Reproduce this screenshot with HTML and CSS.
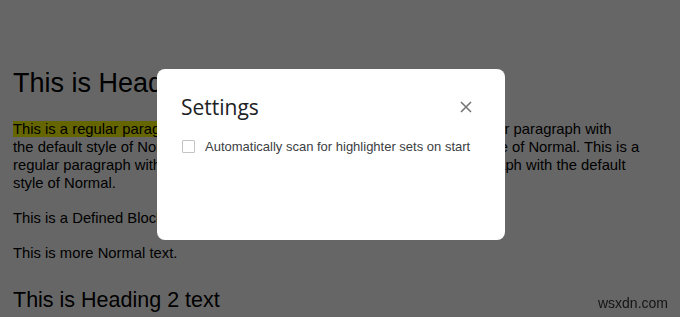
FILE: index.html
```html
<!DOCTYPE html>
<html lang="en">
<head>
    <meta charset="UTF-8">
    <meta name="viewport" content="width=device-width, initial-scale=1.0">
    <title>Settings</title>
    <link rel="stylesheet" href="styles.css">
</head>
<body>
    <div class="doc">
        <h1 class="h1">This is Heading 1 text</h1>
        <p class="para"><span class="mark">This is a regular paragraph with the default style of Normal.</span> This is a regular paragraph with<br>the default style of Normal. This is a regular paragraph with the default style of Normal. This is a<br>regular paragraph with the default style of Normal. This is a regular paragraph with the default<br>style of Normal.</p>
        <p class="para">This is a Defined Block of text.</p>
        <p class="para">This is more Normal text.</p>
        <h2 class="h2">This is Heading 2 text</h2>
    </div>

    <div class="overlay"></div>

    <div class="dialog">
        <div class="dialog-head">
            <h3 class="dialog-title">Settings</h3>
            <span class="close">
                <svg width="12" height="12" viewBox="0 0 12 12">
                    <path d="M1 1L11 11M11 1L1 11" stroke="#757575" stroke-width="1.6" fill="none"/>
                </svg>
            </span>
        </div>
        <label class="option">
            <span class="check"></span>
            <span class="option-text">Automatically scan for highlighter sets on start</span>
        </label>
    </div>

    <div class="mark-site">wsxdn.com</div>
</body>
</html>
```

FILE: styles.css
```css
* {
    margin: 0;
    padding: 0;
    box-sizing: border-box;
}
html, body {
    height: 100%;
}
body {
    overflow: hidden;
    background: #fff;
    font-family: Arial, "Liberation Sans", sans-serif;
    color: #000;
}
.doc {
    padding: 67px 0 0 13px;
    width: 680px;
}
.h1 {
    font-size: 27px;
    font-weight: 400;
    line-height: 32px;
    margin-bottom: 21px;
}
.para {
    font-size: 14.8px;
    line-height: 18px;
    margin-bottom: 17px;
    white-space: nowrap;
}
.mark {
    background: #ffff00;
}
.h2 {
    font-size: 21.5px;
    font-weight: 400;
    line-height: 26px;
    margin-top: 25px;
}
/* grey backdrop over the page */
.overlay {
    position: fixed;
    inset: 0;
    background: rgba(0, 0, 0, 0.6);
}
.dialog {
    position: fixed;
    left: 157px;
    top: 69px;
    width: 348px;
    height: 171px;
    background: #fff;
    border-radius: 8px;
    padding: 24px 24px 0 24px;
    font-family: Roboto, Arial, sans-serif;
}
.dialog-head {
    display: flex;
    justify-content: space-between;
    align-items: center;
    padding-right: 9px;
}
.dialog-title {
    font-family: "Open Sans", Roboto, sans-serif;
    font-size: 21px;
    font-weight: 400;
    color: #202124;
    line-height: 28px;
}
.close {
    display: flex;
    width: 12px;
    height: 12px;
}
.option {
    display: flex;
    align-items: center;
    margin-top: 18px;
    padding-left: 1px;
}
.check {
    width: 13px;
    height: 13px;
    border: 1px solid #c4c4c4;
    border-radius: 1px;
    margin-right: 10px;
}
.option-text {
    font-family: Arial, "Liberation Sans", sans-serif;
    font-size: 13px;
    color: #3c4043;
}
.mark-site {
    position: fixed;
    right: 12px;
    bottom: 6px;
    font-size: 14px;
    color: #141414;
}
```
